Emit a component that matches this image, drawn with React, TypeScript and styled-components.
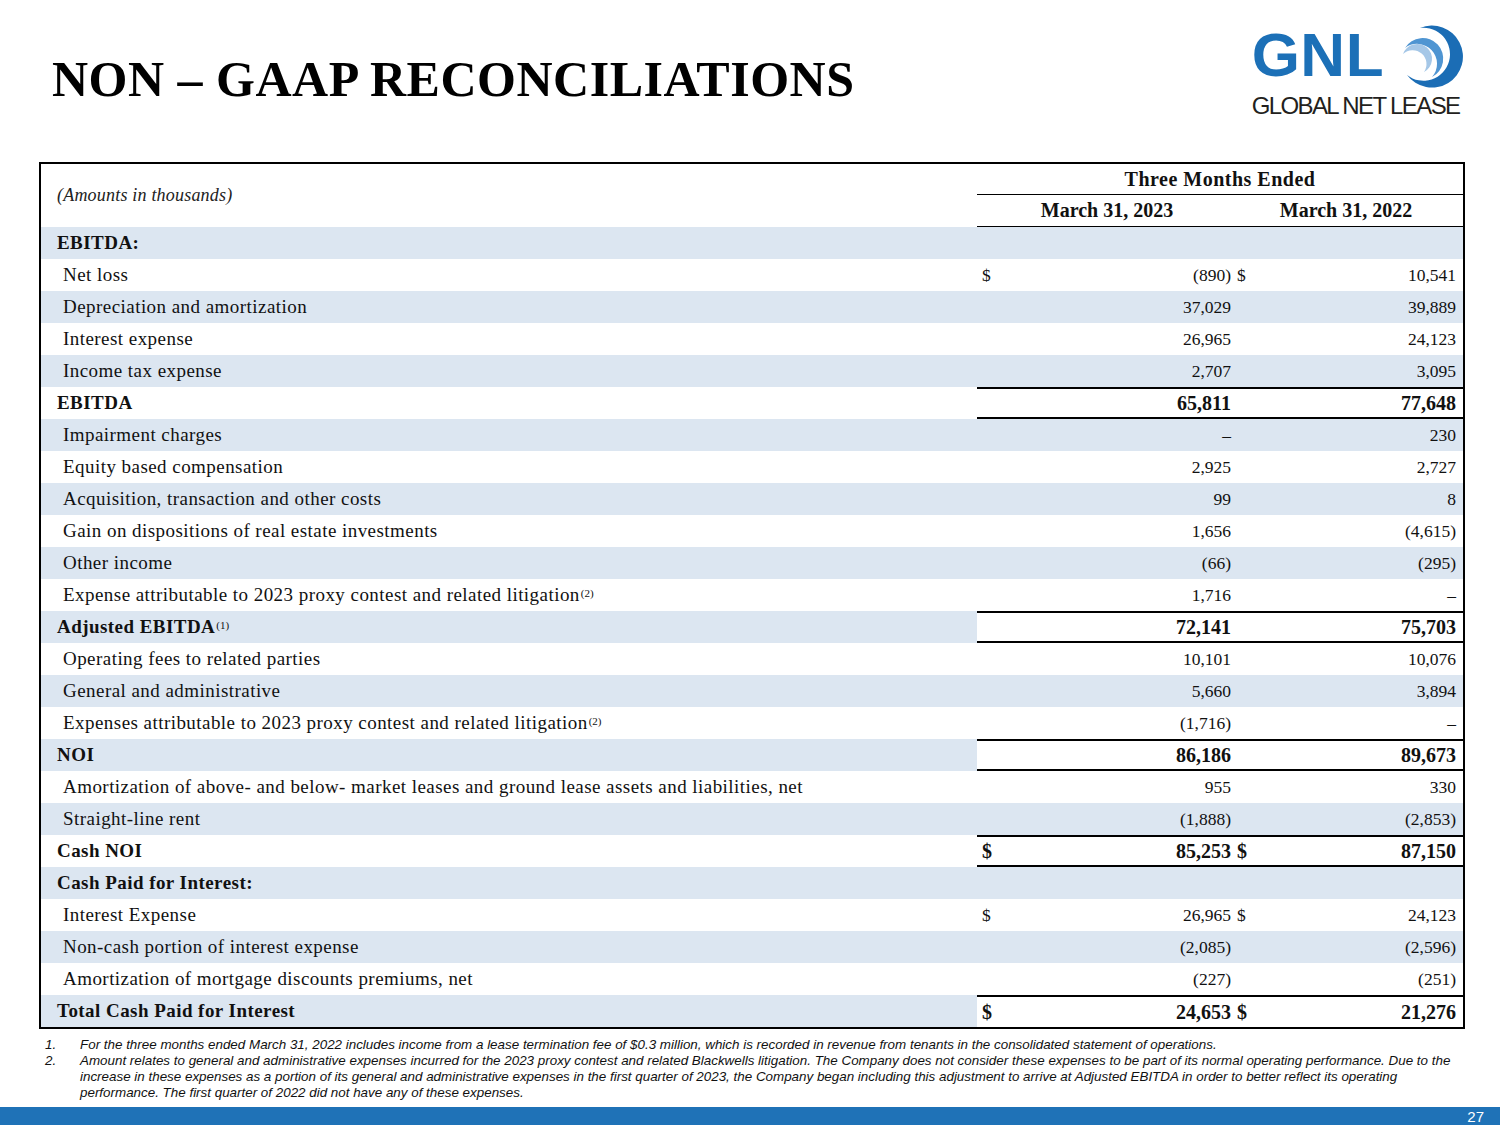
import React from 'react';
import styled, { createGlobalStyle } from 'styled-components';

type Row = {
  label: string;
  note?: string;
  a?: string;
  b?: string;
  kind?: 'section' | 'total';
  dollar?: boolean;
  last?: boolean;
};

const rows: Row[] = [
  { label: 'EBITDA:', kind: 'section' },
  { label: 'Net loss', a: '(890)', b: '10,541', dollar: true },
  { label: 'Depreciation and amortization', a: '37,029', b: '39,889' },
  { label: 'Interest expense', a: '26,965', b: '24,123' },
  { label: 'Income tax expense', a: '2,707', b: '3,095' },
  { label: 'EBITDA', a: '65,811', b: '77,648', kind: 'total' },
  { label: 'Impairment charges', a: '–', b: '230' },
  { label: 'Equity based compensation', a: '2,925', b: '2,727' },
  { label: 'Acquisition, transaction and other costs', a: '99', b: '8' },
  { label: 'Gain on dispositions of real estate investments', a: '1,656', b: '(4,615)' },
  { label: 'Other income', a: '(66)', b: '(295)' },
  { label: 'Expense attributable to 2023 proxy contest and related litigation', note: '(2)', a: '1,716', b: '–' },
  { label: 'Adjusted EBITDA', note: '(1)', a: '72,141', b: '75,703', kind: 'total' },
  { label: 'Operating fees to related parties', a: '10,101', b: '10,076' },
  { label: 'General and administrative', a: '5,660', b: '3,894' },
  { label: 'Expenses attributable to 2023 proxy contest and related litigation', note: '(2)', a: '(1,716)', b: '–' },
  { label: 'NOI', a: '86,186', b: '89,673', kind: 'total' },
  { label: 'Amortization of above- and below- market leases and ground lease assets and liabilities, net', a: '955', b: '330' },
  { label: 'Straight-line rent', a: '(1,888)', b: '(2,853)' },
  { label: 'Cash NOI', a: '85,253', b: '87,150', kind: 'total', dollar: true },
  { label: 'Cash Paid for Interest:', kind: 'section' },
  { label: 'Interest Expense', a: '26,965', b: '24,123', dollar: true },
  { label: 'Non-cash portion of interest expense', a: '(2,085)', b: '(2,596)' },
  { label: 'Amortization of mortgage discounts premiums, net', a: '(227)', b: '(251)' },
  { label: 'Total Cash Paid for Interest', a: '24,653', b: '21,276', kind: 'total', dollar: true, last: true },
];

const GlobalStyle = createGlobalStyle`
  body {
    margin: 0;
    background: #ffffff;
  }
`;

const Slide = styled.div`
  width: 1500px;
  height: 1125px;
  display: flex;
  flex-direction: column;
  overflow: hidden;
  background: #ffffff;
  color: #111;
  font-family: "Liberation Serif", serif;
`;

const Header = styled.header`
  height: 162px;
  box-sizing: border-box;
  padding: 0 33px 0 52px;
  display: flex;
  justify-content: space-between;
  align-items: flex-start;
`;

const Title = styled.h1`
  margin: 54px 0 0;
  font: 700 50px/50px "Liberation Serif", serif;
  letter-spacing: 0.5px;
  color: #000;
`;

const Logo = styled.div`
  margin-top: 20px;
  display: flex;
  flex-direction: column;
`;

const LogoTop = styled.div`
  display: flex;
  align-items: flex-start;
`;

const LogoMark = styled.span`
  margin-top: 4px;
  font: 700 62px/62px "Liberation Sans", Arial, sans-serif;
  letter-spacing: 0.5px;
  color: #1c70b7;
`;

const LogoName = styled.span`
  margin-top: -1px;
  font: 400 24px/24px "Liberation Sans", Arial, sans-serif;
  letter-spacing: -1.6px;
  color: #231f20;
`;

const Swirl = () => (
  <svg width="75" height="75" viewBox="0 0 75 75" style={{ marginLeft: 8 }}>
    <path d="M28 8 A31 31 0 1 1 15 55 A26.5 26.5 0 1 0 28 8 Z" fill="#1b6db5" />
    <path d="M13 28 A20.6 20.6 0 1 1 40 57 A19.9 19.9 0 0 0 13 28 Z" fill="#4f95d2" />
    <path d="M11 34 A14.9 14.9 0 1 1 32 52 A13.9 13.9 0 0 0 11 34 Z" fill="#a5c7e7" />
  </svg>
);

const Table = styled.div`
  margin-left: 39px;
  width: 1426px;
  box-sizing: border-box;
  border: 2px solid #000;
  background: #ffffff;
`;

const HeadGrid = styled.div`
  display: grid;
  grid-template-columns: 936px 260px 226px;
  grid-template-rows: 31px 32px;
`;

const Amounts = styled.div`
  grid-row: 1 / span 2;
  display: flex;
  align-items: center;
  padding-left: 16px;
  font: italic 400 18px "Liberation Serif", serif;
  letter-spacing: 0.2px;
  color: #222;
`;

const PeriodHead = styled.div`
  grid-column: 2 / span 2;
  display: flex;
  align-items: center;
  justify-content: center;
  border-bottom: 1px solid #000;
  font: 700 20px "Liberation Serif", serif;
  letter-spacing: 0.5px;
`;

const DateHead = styled.div<{ $shift: number }>`
  display: flex;
  align-items: center;
  justify-content: center;
  padding-right: ${(p) => p.$shift}px;
  border-bottom: 1px solid #000;
  font: 700 20px "Liberation Serif", serif;
`;

const BodyRow = styled.div<{ $shade: boolean }>`
  display: grid;
  grid-template-columns: 936px 260px 226px;
  height: 32px;
  background: ${(p) => (p.$shade ? '#dce6f1' : '#ffffff')};
`;

const Label = styled.div<{ $strong: boolean }>`
  display: flex;
  align-items: center;
  padding-left: ${(p) => (p.$strong ? 16 : 22)}px;
  font-size: 19px;
  font-weight: ${(p) => (p.$strong ? 700 : 400)};
  letter-spacing: 0.45px;
  white-space: nowrap;
`;

const Note = styled.sup`
  font-size: 11px;
  font-weight: 400;
  letter-spacing: 0;
  margin-left: 1px;
  position: relative;
  top: -2px;
`;

const Num = styled.div<{ $strong: boolean; $rule: 'both' | 'top' | 'none'; $pl: number; $pr: number }>`
  display: flex;
  align-items: center;
  justify-content: space-between;
  box-sizing: border-box;
  padding: 0 ${(p) => p.$pr}px 0 ${(p) => p.$pl}px;
  border-top: ${(p) => (p.$rule !== 'none' ? '2px solid #000' : '0')};
  border-bottom: ${(p) => (p.$rule === 'both' ? '2px solid #000' : '0')};
  font-size: ${(p) => (p.$strong ? 20 : 17.5)}px;
  font-weight: ${(p) => (p.$strong ? 700 : 400)};
  background: ${(p) => (p.$rule !== 'none' ? '#ffffff' : 'transparent')};
`;

const Footnotes = styled.ol`
  margin: 8px 0 0;
  padding: 0 0 0 45px;
  list-style: none;
  font: italic 400 13.4px/16px "Liberation Sans", Arial, sans-serif;
  color: #111;
`;

const Footnote = styled.li`
  display: grid;
  grid-template-columns: 35px 1fr;
  white-space: nowrap;
`;

const Spacer = styled.div`
  flex: 1;
`;

const Bar = styled.footer`
  height: 18px;
  background: #1f72b7;
  display: flex;
  align-items: center;
  justify-content: flex-end;
  padding-right: 16px;
  font: 400 15px "Liberation Sans", Arial, sans-serif;
  color: #ffffff;
`;

const App: React.FC = () => {
  return (
    <Slide>
      <GlobalStyle />
      <Header>
        <Title>NON – GAAP RECONCILIATIONS</Title>
        <Logo>
          <LogoTop>
            <LogoMark>GNL</LogoMark>
            <Swirl />
          </LogoTop>
          <LogoName>GLOBAL NET LEASE</LogoName>
        </Logo>
      </Header>

      <Table>
        <HeadGrid>
          <Amounts>(Amounts in thousands)</Amounts>
          <PeriodHead>Three Months Ended</PeriodHead>
          <DateHead $shift={0}>March 31, 2023</DateHead>
          <DateHead $shift={8}>March 31, 2022</DateHead>
        </HeadGrid>
        {rows.map((r, i) => {
          const strong = r.kind !== undefined;
          const bold = r.kind === 'total';
          const rule = r.kind === 'total' ? (r.last ? 'top' : 'both') : 'none';
          return (
            <BodyRow key={r.label} $shade={i % 2 === 0}>
              <Label $strong={strong}>
                {r.label}
                {r.note && <Note>{r.note}</Note>}
              </Label>
              <Num $strong={bold} $rule={rule} $pl={5} $pr={6}>
                <span>{r.dollar ? '$' : ''}</span>
                <span>{r.a}</span>
              </Num>
              <Num $strong={bold} $rule={rule} $pl={0} $pr={7}>
                <span>{r.dollar ? '$' : ''}</span>
                <span>{r.b}</span>
              </Num>
            </BodyRow>
          );
        })}
      </Table>

      <Footnotes>
        <Footnote>
          <span>1.</span>
          <span>
            For the three months ended March 31, 2022 includes income from a lease termination fee of $0.3 million, which is recorded in revenue from tenants in the consolidated statement of operations.
          </span>
        </Footnote>
        <Footnote>
          <span>2.</span>
          <span>
            Amount relates to general and administrative expenses incurred for the 2023 proxy contest and related Blackwells litigation. The Company does not consider these expenses to be part of its normal operating performance. Due to the
            <br />
            increase in these expenses as a portion of its general and administrative expenses in the first quarter of 2023, the Company began including this adjustment to arrive at Adjusted EBITDA in order to better reflect its operating
            <br />
            performance. The first quarter of 2022 did not have any of these expenses.
          </span>
        </Footnote>
      </Footnotes>

      <Spacer />
      <Bar>27</Bar>
    </Slide>
  );
};

export default App;
